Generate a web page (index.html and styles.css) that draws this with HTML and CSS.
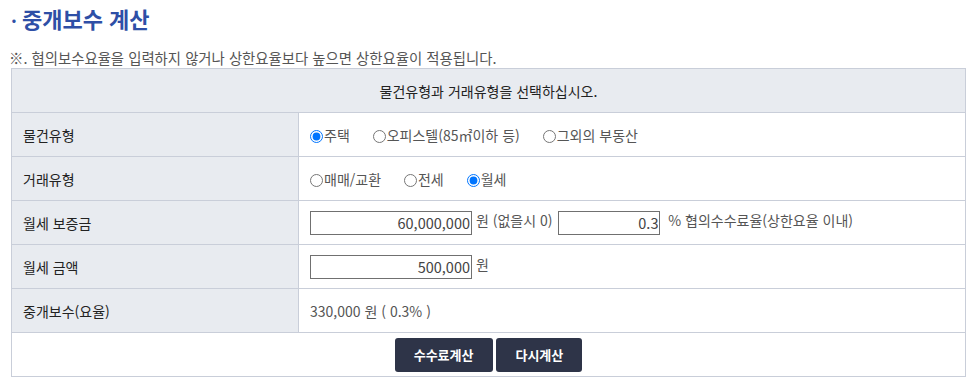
FILE: index.html
```html
<!DOCTYPE html>
<html lang="ko">
<head>
    <meta charset="UTF-8">
    <title>중개보수 계산</title>
    <link rel="stylesheet" href="styles.css">
</head>
<body>
<div class="wrap">
    <h2 class="title"><span class="dot">·</span>중개보수 계산</h2>
    <p class="note">※. 협의보수요율을 입력하지 않거나 상한요율보다 높으면 상한요율이 적용됩니다.</p>

    <table class="calc">
        <colgroup>
            <col class="c-label">
            <col>
        </colgroup>
        <tr>
            <th colspan="2" class="head">물건유형과 거래유형을 선택하십시오.</th>
        </tr>
        <tr>
            <th>물건유형</th>
            <td>
                <label class="opt"><input type="radio" name="kind" checked>주택</label>
                <label class="opt"><input type="radio" name="kind">오피스텔(85㎡이하 등)</label>
                <label class="opt"><input type="radio" name="kind">그외의 부동산</label>
            </td>
        </tr>
        <tr>
            <th>거래유형</th>
            <td>
                <label class="opt"><input type="radio" name="deal">매매/교환</label>
                <label class="opt"><input type="radio" name="deal">전세</label>
                <label class="opt"><input type="radio" name="deal" checked>월세</label>
            </td>
        </tr>
        <tr>
            <th>월세 보증금</th>
            <td>
                <input type="text" class="num" value="60,000,000"> 원 (없을시 0)
                <input type="text" class="num small" value="0.3"> &nbsp;% 협의수수료율(상한요율 이내)
            </td>
        </tr>
        <tr>
            <th>월세 금액</th>
            <td><input type="text" class="num" value="500,000"> 원</td>
        </tr>
        <tr>
            <th>중개보수(요율)</th>
            <td>330,000 원 ( 0.3% )</td>
        </tr>
        <tr>
            <td colspan="2" class="btns">
                <button>수수료계산</button>
                <button>다시계산</button>
            </td>
        </tr>
    </table>
</div>
</body>
</html>
```

FILE: styles.css
```css
body {
    margin: 0;
    font-family: "Noto Sans CJK KR", "Noto Sans", sans-serif;
    color: #333;
    background: #fff;
}
.wrap {
    padding: 0 7px 0 11px;
}
.title {
    margin: 0;
    padding-top: 3px;
    height: 33px;
    font-size: 22px;
    font-weight: bold;
    color: #2e4fa6;
    line-height: 30px;
}
.dot {
    display: inline-block;
    width: 5px;
    font-size: 18px;
    margin-right: 6px;
}
.note {
    margin: 0 0 0 -2px;
    font-size: 14.4px;
    color: #555;
    line-height: 20px;
    height: 20px;
    padding-top: 12px;
}
.calc {
    width: 100%;
    border-collapse: collapse;
    table-layout: fixed;
    font-size: 14px;
}
.c-label {
    width: 287px;
}
.calc th, .calc td {
    border: 1px solid #c9ced9;
    height: 43px;
    padding: 0;
}
.calc th {
    background: #e8ebf0;
    font-weight: normal;
    text-align: left;
    padding-left: 11px;
    color: #222;
}
.calc th.head {
    text-align: center;
    padding-left: 0;
}
.calc td {
    padding-left: 11px;
    color: #555;
}
.opt {
    margin-right: 19px;
}
.opt input {
    width: 13px;
    height: 13px;
    margin: 0 1px 0 0;
    vertical-align: -2px;
}
.num {
    width: 162px;
    height: 24px;
    box-sizing: border-box;
    border: 1px solid #707070;
    text-align: right;
    font-family: inherit;
    font-size: 14.5px;
    color: #444;
    padding: 0 1px;
    margin: 0;
    vertical-align: middle;
}
.num.small {
    width: 102px;
    margin-left: 2px;
}
.calc td.btns {
    text-align: center;
    padding: 0;
}
button {
    height: 34px;
    padding: 0 19px;
    background: #2e3448;
    color: #fff;
    border: none;
    border-radius: 3px;
    font-family: inherit;
    font-size: 13px;
    font-weight: bold;
    cursor: pointer;
    margin: 0;
    vertical-align: middle;
}
```
